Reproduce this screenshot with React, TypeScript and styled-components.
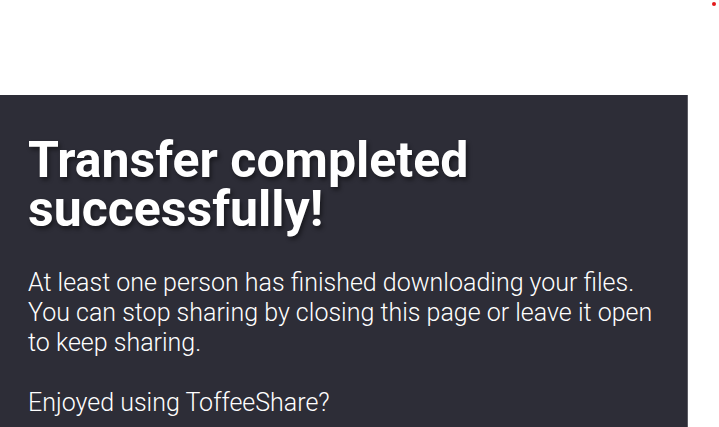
import React from "react";
import styled, { createGlobalStyle } from "styled-components";

const Global = createGlobalStyle`
  html, body { margin: 0; padding: 0; background: #ffffff; }
  body { font-family: Roboto, "Noto Sans", Arial, sans-serif; overflow: hidden; }
`;

const Page = styled.div`
  position: relative;
  width: 719px;
  height: 427px;
  overflow: hidden;
  background: #ffffff;
  padding-top: 95px;
  box-sizing: border-box;
`;

const StatusDot = styled.span`
  position: absolute;
  left: 712px;
  top: 2px;
  width: 4px;
  height: 4px;
  border-radius: 50%;
  background: #e3191b;
`;

const Panel = styled.section`
  width: 688px;
  box-sizing: border-box;
  background: #2d2d37;
  border-right: 1px solid #5c5c64;
  padding: 41px 28px 40px 28px;
  color: #ffffff;
`;

const Title = styled.h1`
  margin: 0;
  font-family: Roboto, sans-serif;
  font-weight: 700;
  font-size: 50px;
  line-height: 49px;
  letter-spacing: 0;
  text-shadow: 2px 3px 4px rgba(0, 0, 0, 0.45);
`;

const Text = styled.p`
  margin: 0 0 30px 0;
  font-family: Roboto, sans-serif;
  font-weight: 300;
  font-size: 25px;
  line-height: 30px;
  &:first-of-type { margin-top: 34px; }
`;

export default function App() {
  return (
    <>
      <Global />
      <Page>
        <StatusDot />
        <Panel>
          <Title>Transfer completed successfully!</Title>
          <Text>
            At least one person has finished downloading your files. You can stop
            sharing by closing this page or leave it open to keep sharing.
          </Text>
          <Text>Enjoyed using ToffeeShare?</Text>
        </Panel>
      </Page>
    </>
  );
}
